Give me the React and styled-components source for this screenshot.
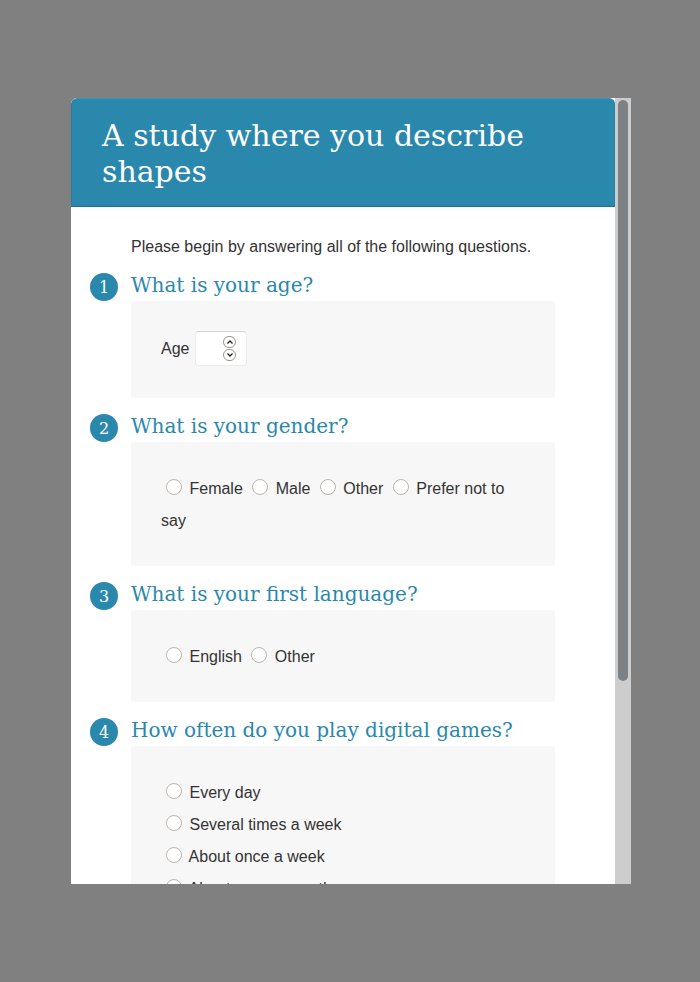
import React from 'react'
import styled, { createGlobalStyle } from 'styled-components'

const GlobalStyle = createGlobalStyle`
  html, body {
    margin: 0;
    padding: 0;
    height: 100%;
  }
  body {
    background: #808080;
    font-family: "Liberation Sans", Arial, sans-serif;
    color: #333;
  }
  #root {
    height: 100%;
  }
`

const questions = [
  {
    title: 'What is your gender?',
    name: 'gender',
    inline: true,
    options: ['Female', 'Male', 'Other', 'Prefer not to say'],
  },
  {
    title: 'What is your first language?',
    name: 'language',
    inline: true,
    options: ['English', 'Other'],
  },
  {
    title: 'How often do you play digital games?',
    name: 'games',
    inline: false,
    options: [
      'Every day',
      'Several times a week',
      'About once a week',
      'About once a month',
      'Less than once a month',
      'Never',
    ],
  },
]

const App = () => {
  return (
    <>
      <GlobalStyle />
      <Backdrop>
        <Panel>
          <Content>
            <Header>
              <Title>A study where you describe shapes</Title>
            </Header>
            <Body>
              <Intro>Please begin by answering all of the following questions.</Intro>

              <Question>
                <QuestionHead>
                  <Number>1</Number>
                  <QuestionTitle>What is your age?</QuestionTitle>
                </QuestionHead>
                <Card>
                  <AgeLabel>
                    Age
                    <AgeField>
                      <AgeInput type="text" inputMode="numeric" />
                      <Spinner>
                        <SpinButton>
                          <svg width="8" height="6" viewBox="0 0 8 6">
                            <path d="M1.5 4.5 L4 2 L6.5 4.5" fill="none" stroke="#222" strokeWidth="1.3" />
                          </svg>
                        </SpinButton>
                        <SpinButton>
                          <svg width="8" height="6" viewBox="0 0 8 6">
                            <path d="M1.5 1.5 L4 4 L6.5 1.5" fill="none" stroke="#222" strokeWidth="1.3" />
                          </svg>
                        </SpinButton>
                      </Spinner>
                    </AgeField>
                  </AgeLabel>
                </Card>
              </Question>

              {questions.map((q, i) => (
                <Question key={q.name}>
                  <QuestionHead>
                    <Number>{i + 2}</Number>
                    <QuestionTitle>{q.title}</QuestionTitle>
                  </QuestionHead>
                  <Card $choices>
                    {q.options.map((opt) => (
                      <Option key={opt} $block={!q.inline}>
                        <Radio type="radio" name={q.name} /> {opt}{' '}
                      </Option>
                    ))}
                  </Card>
                </Question>
              ))}

              <Actions>
                <Button type="button">Continue</Button>
              </Actions>
            </Body>
          </Content>
          <ScrollTrack>
            <ScrollThumb />
          </ScrollTrack>
        </Panel>
      </Backdrop>
    </>
  )
}

const Backdrop = styled.div`
  height: 100%;
  padding-left: 2px;
  box-sizing: border-box;
  display: flex;
  align-items: center;
  justify-content: center;
`

const Panel = styled.div`
  width: 560px;
  height: 786px;
  display: flex;
`

const Content = styled.div`
  flex: 1;
  overflow: hidden;
  background: #fff;
  border-radius: 6px 0 0 0;
`

const ScrollTrack = styled.div`
  width: 16px;
  flex-shrink: 0;
  background: #cdcdcd;
  padding: 2px 3px;
  box-sizing: border-box;
`

const ScrollThumb = styled.div`
  height: 581px;
  border-radius: 5px;
  background: #7e8184;
`

const Header = styled.div`
  background: #2a88ad;
  border: 1px solid #2580a6;
  border-top-color: #3993b6;
  border-bottom-color: #1f6f90;
  border-radius: 6px 6px 0 0;
  padding: 19px 30px 16px;
`

const Title = styled.h1`
  margin: 0;
  font-family: "DejaVu Serif", serif;
  font-weight: normal;
  font-size: 30px;
  line-height: 36px;
  color: #fff;
`

const Body = styled.div`
  padding: 31px 60px 40px;
`

const Intro = styled.p`
  margin: 0 0 17px;
  font-size: 16px;
  line-height: 18px;
`

const Question = styled.section`
  margin-bottom: 16px;
`

const QuestionHead = styled.div`
  display: flex;
  align-items: center;
  gap: 13px;
  height: 28px;
  margin-left: -41px;
`

const Number = styled.span`
  width: 28px;
  height: 28px;
  border-radius: 50%;
  background: #2a88ad;
  color: #fff;
  font-family: "DejaVu Serif", serif;
  font-size: 16px;
  display: flex;
  align-items: center;
  justify-content: center;
  flex-shrink: 0;
`

const QuestionTitle = styled.h2`
  margin: 0 0 4px;
  font-family: "DejaVu Serif", serif;
  font-weight: normal;
  font-size: 20px;
  color: #2a88ad;
`

const Card = styled.div`
  background: #f7f7f7;
  border-radius: 4px;
  padding: ${({ $choices }) => ($choices ? '31px 30px 29px' : '30px')};
  font-size: 16px;
  line-height: 32px;
`

const AgeLabel = styled.label`
  display: flex;
  align-items: center;
  gap: 6px;
  height: 37px;
  box-sizing: border-box;
  padding-bottom: 2px;
`

const AgeField = styled.span`
  display: flex;
  align-items: center;
  width: 52px;
  height: 35px;
  box-sizing: border-box;
  border: 1px solid #ececec;
  border-top-color: #d4d4d4;
  border-radius: 4px;
  background: #fff;
  padding: 0 10px 0 6px;
`

const AgeInput = styled.input`
  width: 0;
  flex: 1;
  border: none;
  outline: none;
  padding: 0;
  background: transparent;
  font-size: 16px;
`

const Spinner = styled.span`
  display: flex;
  flex-direction: column;
  gap: 1px;
`

const SpinButton = styled.span`
  width: 13px;
  height: 12px;
  box-sizing: border-box;
  border: 1px solid #9a948e;
  border-radius: 6px;
  display: flex;
  align-items: center;
  justify-content: center;
`

const Option = styled.label`
  display: ${({ $block }) => ($block ? 'block' : 'inline')};
`

const Radio = styled.input`
  appearance: none;
  width: 16px;
  height: 16px;
  box-sizing: border-box;
  margin: 0 3px 0 5px;
  border: 1px solid #bdb6ae;
  border-radius: 50%;
  background: #fff;
  vertical-align: -1px;
`

const Actions = styled.div`
  padding-top: 14px;
`

const Button = styled.button`
  background: #2a88ad;
  color: #fff;
  border: none;
  border-radius: 4px;
  padding: 10px 24px;
  font-family: "Liberation Sans", Arial, sans-serif;
  font-size: 16px;
`

export default App
